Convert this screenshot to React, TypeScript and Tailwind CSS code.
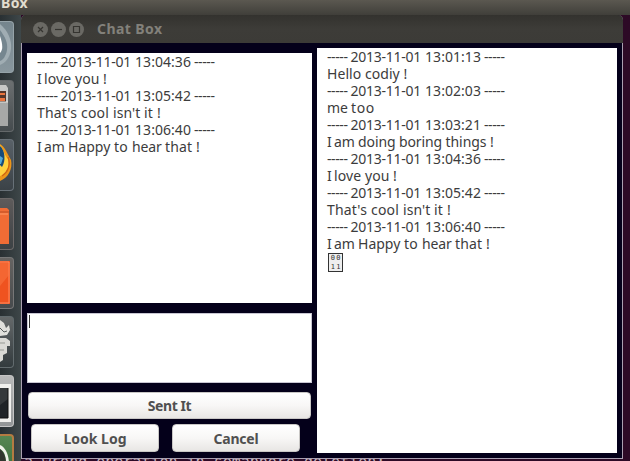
import { useLayoutEffect, useRef, type ReactNode } from "react";

/* Text run spread to a fixed advance width by adjusting its tracking. */
function Run({ text, width, className = "" }: { text: string; width: number; className?: string }) {
  const ref = useRef<HTMLSpanElement>(null);
  useLayoutEffect(() => {
    const el = ref.current;
    if (!el) return;
    el.style.letterSpacing = "0px";
    const natural = el.getBoundingClientRect().width;
    el.style.letterSpacing = `${(width - natural) / text.length}px`;
  }, [text, width]);
  return (
    <span ref={ref} className={`inline-block whitespace-pre ${className}`}>
      {text}
    </span>
  );
}

function Stamp({ time }: { time: string }) {
  return (
    <div className="flex h-[17px]">
      <Run text="-----" width={20.5} className="mr-[3px]" />
      <Run text="2013-11-01" width={70.5} className="mr-[4px]" />
      <Run text={time} width={56} className="mr-[3px]" />
      <Run text="-----" width={20.5} />
    </div>
  );
}

type Entry = { time: string; words: [string, number][] };

const LOVE: Entry = { time: "13:04:36", words: [["I ", 7], ["love ", 31], ["you ", 28], ["!", 4]] };
const COOL: Entry = { time: "13:05:42", words: [["That's ", 44], ["cool ", 32], ["isn't ", 31], ["it ", 13], ["!", 4]] };
const HAPPY: Entry = { time: "13:06:40", words: [["I ", 7], ["am ", 24], ["Happy ", 46], ["to ", 18], ["hear ", 33], ["that ", 31], ["!", 4]] };

const LOG: Entry[] = [
  { time: "13:01:13", words: [["Hello ", 38], ["codiy ", 38.5], ["!", 4]] },
  { time: "13:02:03", words: [["me ", 24], ["too", 24]] },
  { time: "13:03:21", words: [["I ", 7], ["am ", 24], ["doing ", 41], ["boring ", 46.5], ["things ", 44.5], ["!", 4]] },
  LOVE,
  COOL,
  HAPPY,
];

function Messages({ items }: { items: Entry[] }) {
  return (
    <div className="pl-[10px] font-['Noto_Sans',sans-serif] text-[14px] leading-[17px] text-[#3c3c3c]">
      {items.map((m) => (
        <div key={m.time}>
          <Stamp time={m.time} />
          <div className="flex h-[17px]">
            {m.words.map(([w, n], i) => (
              <Run key={i} text={w} width={n} />
            ))}
          </div>
        </div>
      ))}
    </div>
  );
}

function Button({ label, width, className }: { label: string; width: number; className: string }) {
  return (
    <button
      className={`flex items-center justify-center rounded-[4px] border border-[#c9c7c5] bg-linear-to-b from-white via-[#f8f7f6] to-[#e8e6e4] font-['Noto_Sans',sans-serif] text-[14px] leading-[17px] font-bold text-[#505050] ${className}`}
    >
      <Run text={label} width={width} />
    </button>
  );
}

function WindowControl({ children }: { children: ReactNode }) {
  return (
    <span className="h-[15px] w-[15px] rounded-full bg-[#6a6964]">
      <svg viewBox="0 0 15 15" className="h-full w-full" fill="none" stroke="#353430" strokeWidth="1.2">
        {children}
      </svg>
    </span>
  );
}

function Tile({ className, children }: { className: string; children: ReactNode }) {
  return (
    <div className={`h-[52px] w-[14px] shrink-0 overflow-hidden rounded-r-[4px] border border-l-0 ${className}`}>
      <svg viewBox="0 0 14 52" className="-mt-px h-[52px] w-[14px]">
        {children}
      </svg>
    </div>
  );
}

function Launcher() {
  return (
    <aside className="flex w-[21px] shrink-0 flex-col gap-[7px] overflow-hidden bg-linear-to-r from-[#293033] to-[#3e4749] pt-[6px]">
      <Tile className="border-[#96a3a9] bg-linear-to-b from-[#75858d] to-[#89979e]">
        <path d="M0 3C8 10 12 19 11 28C10 37 5 42 0 44Z" fill="#a0adb3" />
        <path d="M0 9C5 16 8 21 7 29C6 35 3 39 0 40Z" fill="#75868f" />
        <path d="M0 15C3 24 3 29 0 32Z" fill="#fff" />
      </Tile>
      <Tile className="border-[#64686a] bg-linear-to-b from-[#6c7071] to-[#454b4e]">
        <path d="M0 5H6L8 8V46H0Z" fill="#c8c8c6" />
        <path d="M0 11H6V22H0Z" fill="#55362a" />
        <path d="M0 13H5V15H0ZM0 18H5V21H0Z" fill="#eb743d" />
        <path d="M0 22H8V46H0Z" fill="#a7a8a7" />
        <path d="M0 22H8" stroke="#e3e3e0" />
      </Tile>
      <Tile className="border-[#687178] bg-linear-to-b from-[#596168] to-[#3b4247]">
        <path d="M0 5C5 8 7 14 11 21C13 30 8 39 0 42Z" fill="#ed9619" />
        <path d="M0 6C4 11 4 16 8 20C10 29 6 36 0 37Z" fill="#ffd13d" />
        <path d="M0 7C5 11 6 22 2 28L0 26Z" fill="#174b79" />
        <path d="M0 17L3 19L1 25H0Z" fill="#52a8d7" />
        <path d="M8 18C11 26 8 33 2 37" stroke="#cf6713" strokeWidth="1.3" fill="none" />
      </Tile>
      <Tile className="border-[#6c6868] bg-linear-to-b from-[#5e5b5b] to-[#3c4144]">
        <path d="M0 10H7L9 12V46H0Z" fill="#f06c35" />
        <path d="M0 14H9" stroke="#b94c24" />
        <path d="M0 16H8" stroke="#ff9a67" />
      </Tile>
      <Tile className="border-[#777] bg-linear-to-b from-[#666462] to-[#474b4d]">
        <path d="M0 4H10V47H0Z" fill="#ef5320" />
        <path d="M0 5H9V46H0" stroke="#ff8d61" fill="none" />
        <path d="M0 6H9V18L0 29Z" fill="#fa7a44" opacity=".5" />
      </Tile>
      <Tile className="border-[#626b6e] bg-linear-to-b from-[#65696a] to-[#333b3e]">
        <path d="M0 4L4 7L6 12L9 9L10 14L7 19L0 20Z" fill="#e0e0dc" />
        <path d="M0 12L4 16L7 15" stroke="#555a5a" fill="none" />
        <path d="M0 22H6L10 25V30H7V37L3 39V44L0 46Z" fill="#dadad6" />
        <path d="M0 27H5M0 34H4" stroke="#969994" />
      </Tile>
      <Tile className="border-[#c5c5c5] bg-linear-to-b from-[#b8b9b9] to-[#929596]">
        <path d="M0 9H11V47H0Z" fill="#f0f0ed" />
        <path d="M0 13H8V43H0Z" fill="#202427" />
        <path d="M0 13H8V24L0 30Z" fill="#4a4e50" opacity=".5" />
        <path d="M8 13V43H0" stroke="#111" fill="none" />
      </Tile>
      <Tile className="border-2 border-[#b47b42] bg-linear-to-b from-[#568652] to-[#326535]">
        <path d="M0 10C5 12 9 19 9 29H6C6 20 4 16 0 14Z" fill="#eef1e8" />
        <path d="M0 14C4 17 6 22 6 29H0Z" fill="#31352e" />
      </Tile>
    </aside>
  );
}

export default function App() {
  return (
    <div className="flex h-[461px] w-[630px] flex-col overflow-hidden bg-[#2d0a26]">
      <header className="h-[15px] shrink-0 overflow-hidden bg-linear-to-b from-[#5b5850] to-[#403f3a] pl-px font-['Noto_Sans',sans-serif] text-[14px] leading-[17px] font-bold text-[#e2ddcf]">
        <div className="-mt-[6px]"><Run text="Box" width={27} /></div>
      </header>
      <div className="flex min-h-0 flex-1">
        <Launcher />
        <div className="flex w-[609px] flex-col">
          <section className="flex h-[444px] w-[602px] shrink-0 flex-col rounded-t-[5px] border border-t-0 border-[#aaa0b1] bg-[#04001a]">
            <div className="-mx-px flex h-[28px] shrink-0 items-center gap-[3px] rounded-t-[5px] bg-linear-to-b from-[#33322e] via-[#3d3c38] to-[#3c3b37] pl-[12px]">
              <WindowControl><path d="M5 5L10 10M10 5L5 10" /></WindowControl>
              <WindowControl><path d="M4 7.5H11" /></WindowControl>
              <WindowControl><path d="M4.5 4.5H10.5V10.5H4.5Z" /></WindowControl>
              <div className="-mt-px ml-[10px] font-['Noto_Sans',sans-serif] text-[14px] leading-[17px] font-bold text-[#83817b]">
                <Run text="Chat Box" width={65.5} />
              </div>
            </div>
            <div className="flex gap-[5px] pt-[5px] pl-[5px]">
              <div className="w-[285px] pt-[5px]">
                <div className="h-[250px] bg-white">
                  <Messages items={[LOVE, COOL, HAPPY]} />
                </div>
                <div className="mt-[10px] h-[70px] border border-[#c8c6d2] bg-white pt-px pl-px">
                  <div className="h-[13px] w-px bg-[#333]" />
                </div>
                <Button label="Sent It" width={43.5} className="mt-[9px] ml-px h-[27px] w-[283px]" />
                <div className="mt-[5px] flex gap-[13px] pl-[4px]">
                  <Button label="Look Log" width={63} className="h-[28px] w-[128px]" />
                  <Button label="Cancel" width={45} className="h-[28px] w-[128px]" />
                </div>
              </div>
              <div className="h-[405px] w-[300px] bg-white">
                <Messages items={LOG} />
                <div className="mt-px ml-[11px] grid h-[19px] w-[15px] grid-cols-2 place-items-center border border-[#333] bg-[#eee] px-px font-['DejaVu_Sans_Mono',monospace] text-[7px] leading-[8px] text-[#333]">
                  <span>0</span><span>0</span><span>1</span><span>1</span>
                </div>
              </div>
            </div>
          </section>
          <div className="h-[2px] overflow-hidden pl-[3px] font-['DejaVu_Sans_Mono',monospace] text-[15px] leading-[17px] whitespace-pre text-[#c5b7c0]">
            <div className="-mt-[5px]">a wrong operation in semaphore deletion:</div>
          </div>
        </div>
      </div>
    </div>
  );
}
